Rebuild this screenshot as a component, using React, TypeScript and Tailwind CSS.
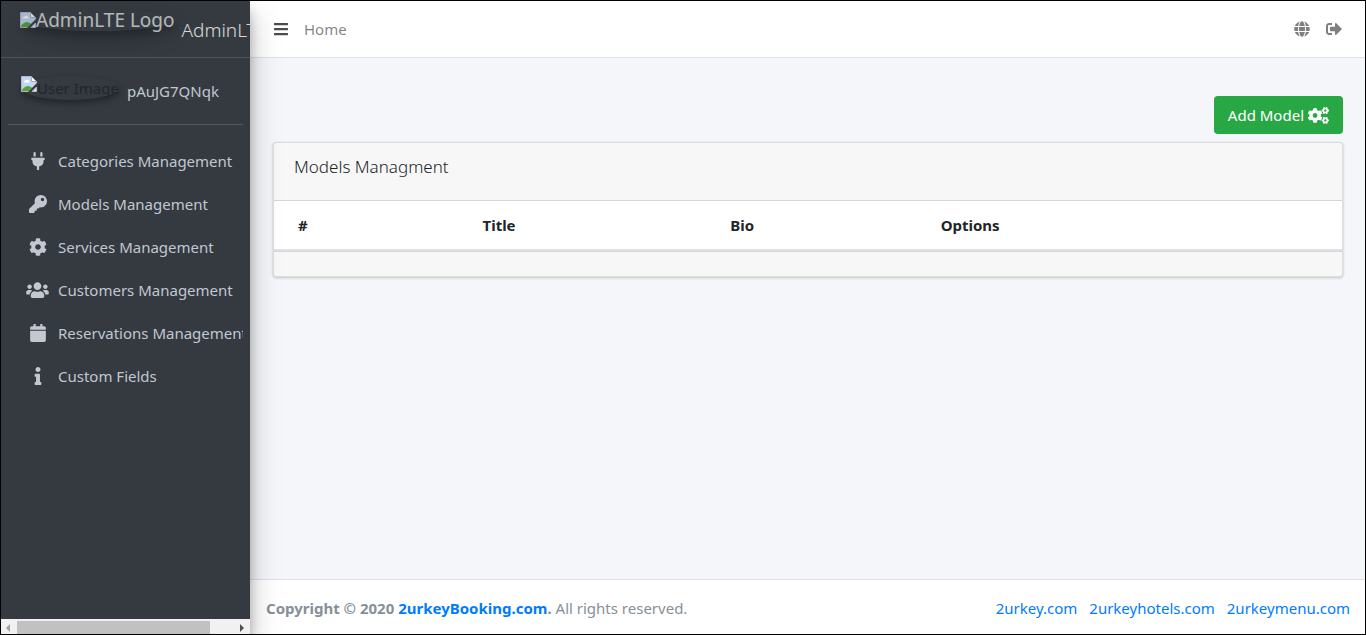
import React from "react";
import {
  FaBars,
  FaCalendar,
  FaCog,
  FaCogs,
  FaGlobe,
  FaInfo,
  FaKey,
  FaPlug,
  FaSignOutAlt,
  FaUsers,
} from "react-icons/fa";

const menu = [
  { label: "Categories Management", icon: <FaPlug className="size-[18px]" /> },
  { label: "Models Management", icon: <FaKey className="size-[18px]" /> },
  { label: "Services Management", icon: <FaCog className="size-[18px]" /> },
  { label: "Customers Management", icon: <FaUsers className="h-[18px] w-[23px]" /> },
  { label: "Reservations Management", icon: <FaCalendar className="size-[18px]" /> },
  { label: "Custom Fields", icon: <FaInfo className="size-[18px]" /> },
];

const footerLinks = ["2urkey.com", "2urkeyhotels.com", "2urkeymenu.com"];

function BrokenImage() {
  return (
    <svg className="size-4 shrink-0" viewBox="0 0 16 16" aria-hidden="true">
      <path d="M0.5 0.5H10.500L15.500 5.500V8L8 15.500H0.500z" fill="#c3d5f7" stroke="#b4b8bd" />
      <path d="M10.500 0.500v5h5z" fill="#fff" stroke="#a9adb2" />
      <path d="M3 6.500a1.500 1.500 0 0 1 1.500-2 2 2 0 0 1 3.500 0.500 1 1 0 0 1 0.500 1.500z" fill="#fff" />
      <path d="M1 15v-1c2-3 4-4 6-4s3 1 4 2l-3 3z" fill="#52a535" />
      <path d="M16 7v3L10 16H7z" fill="#343a40" />
      <path d="M15.500 11v4.500H11z" fill="#dfe6ee" stroke="#b4b8bd" />
    </svg>
  );
}

function Sidebar() {
  return (
    <aside className="z-10 flex w-[249px] shrink-0 flex-col bg-[#343a40] text-[#c2c7d0] shadow-[0_14px_28px_rgba(0,0,0,0.25),0_10px_10px_rgba(0,0,0,0.22)]">
      <a
        href="#"
        className="flex h-[57px] shrink-0 items-start gap-[7px] overflow-hidden border-b border-[#4b545c] pt-2 pl-[19px] whitespace-nowrap text-white/80"
      >
        <span className="flex h-[22px] shrink-0 items-center rounded-[50%] opacity-80 shadow-[0_10px_20px_rgba(0,0,0,0.19),0_6px_6px_rgba(0,0,0,0.23)]">
          <BrokenImage />
          <span className="text-[19px]">AdminLTE Logo</span>
        </span>
        <span className="pt-[9px] text-[19px] font-light">AdminLTE 3</span>
      </a>
      <div className="mx-[7px] flex grow flex-col overflow-hidden">
        <div className="flex h-[67px] shrink-0 items-start gap-2 border-b border-[#4f5962] pt-[18px] pl-[13px]">
          <span className="flex h-6 items-start rounded-[50%] text-[#212529] shadow-[0_3px_6px_rgba(0,0,0,0.16),0_3px_6px_rgba(0,0,0,0.23)]">
            <BrokenImage />
            <span>User Image</span>
          </span>
          <a href="#" className="pt-[3px]">
            pAuJG7QNqk
          </a>
        </div>
        <nav className="pt-4">
          <ul>
            {menu.map((item) => (
              <li key={item.label} className="mb-[3px]">
                <a href="#" className="flex h-10 items-center gap-2 pl-[17px] whitespace-nowrap">
                  <span className="flex w-[25px] shrink-0 justify-center">{item.icon}</span>
                  <span>{item.label}</span>
                </a>
              </li>
            ))}
          </ul>
        </nav>
      </div>
      <div className="flex h-[15px] shrink-0 items-center bg-[#f1f1f1] pt-[2px]" aria-hidden="true">
        <svg className="h-2 w-4" viewBox="0 0 16 8">
          <path d="M9 0v8L5 4z" fill="#a3a3a3" />
        </svg>
        <div className="h-full w-[193px] bg-[#c1c1c1]" />
        <div className="grow" />
        <svg className="h-2 w-4" viewBox="0 0 16 8">
          <path d="M6 0v8l4-4z" fill="#505050" />
        </svg>
      </div>
    </aside>
  );
}

export default function App() {
  return (
    <div className="flex min-h-screen border border-black bg-[#f4f6f9] font-['Noto_Sans','Open_Sans',sans-serif] text-[15px] leading-6 text-[#212529]">
      <Sidebar />
      <div className="flex min-w-0 grow flex-col">
        <header className="flex h-[57px] shrink-0 items-center border-b border-[#dee2e6] bg-white pr-[23px] pl-6 text-black/50">
          <button type="button" aria-label="Toggle menu" className="text-black/70">
            <FaBars className="h-4 w-[14px]" />
          </button>
          <a href="#" className="pl-4">
            Home
          </a>
          <div className="ml-auto flex gap-4">
            <a href="#" aria-label="Language">
              <FaGlobe className="size-4" />
            </a>
            <a href="#" aria-label="Sign out">
              <FaSignOutAlt className="size-4" />
            </a>
          </div>
        </header>
        <main className="flex grow flex-col pt-[38px] pr-[22px] pl-[23px]">
          <button
            type="button"
            className="flex h-[38px] items-center gap-1 self-end rounded bg-[#28a745] px-[14px] text-white"
          >
            Add Model
            <FaCogs className="h-[17px] w-[21px]" />
          </button>
          <section className="mt-2 overflow-hidden rounded border border-[#dcdee1] bg-white shadow-[0_0_1px_rgba(0,0,0,0.125),0_1px_3px_rgba(0,0,0,0.2)]">
            <div className="h-[58px] border-b border-[#d5d6d7] bg-[#f7f7f7] px-5 pt-3">
              <h3 className="text-[17px] font-light">Models Managment</h3>
            </div>
            <table className="w-full table-fixed text-left">
              <thead>
                <tr className="h-[49px] border-b-2 border-[#dee2e6]">
                  <th className="w-[18.4%] pl-6 font-bold">#</th>
                  <th className="w-[23.2%] pl-3 font-bold">Title</th>
                  <th className="w-[19.7%] pl-3 font-bold">Bio</th>
                  <th className="pl-3 font-bold">Options</th>
                </tr>
              </thead>
            </table>
            <div className="h-[25px] border-t border-[#d5d6d7] bg-[#f7f7f7]" />
          </section>
        </main>
        <footer className="flex h-[55px] shrink-0 items-center justify-between border-t border-[#dee2e6] bg-white pt-[2px] pr-[15px] pl-4 text-[#869099]">
          <div>
            <strong>
              Copyright © 2020{" "}
              <a href="#" className="text-[#007bff]">
                2urkeyBooking.com
              </a>
              .
            </strong>{" "}
            All rights reserved.
          </div>
          <div className="flex gap-3 text-[#007bff]">
            {footerLinks.map((name) => (
              <a key={name} href="#">
                {name}
              </a>
            ))}
          </div>
        </footer>
      </div>
    </div>
  );
}
